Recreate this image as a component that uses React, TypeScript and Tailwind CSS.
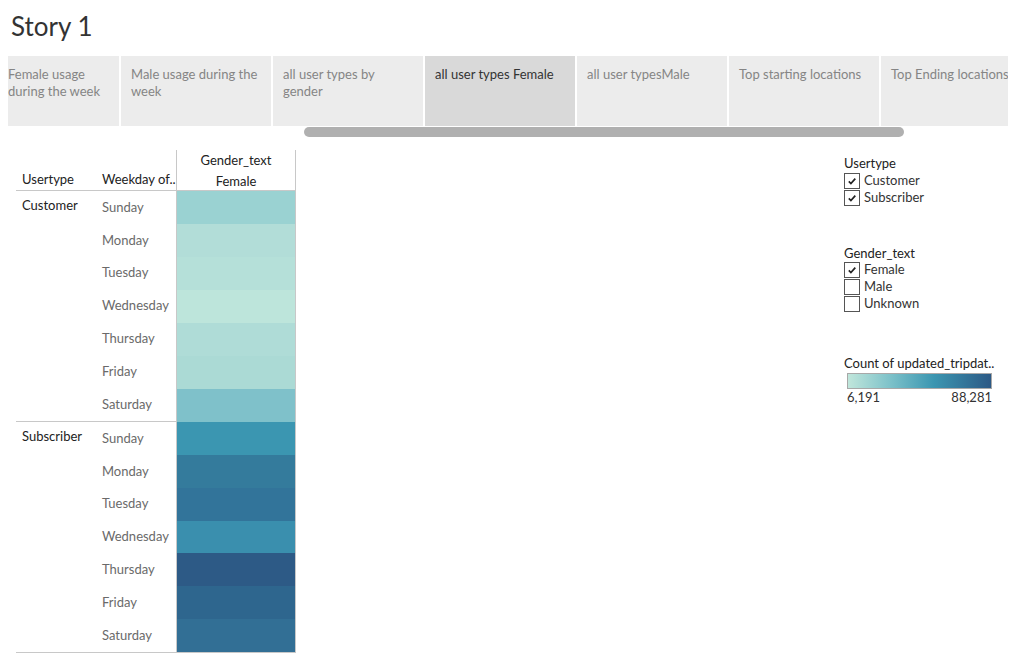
import React from 'react';

const tabs = [
  { label: 'Female usage during the week', w: 'w-[111px] pl-0 pr-[10px]' },
  { label: 'Male usage during the week', w: 'w-[150px] px-[10px]' },
  { label: 'all user types by gender', w: 'w-[150px] px-[10px]' },
  { label: 'all user types Female', w: 'w-[150px] px-[10px]', active: true },
  { label: 'all user typesMale', w: 'w-[150px] px-[10px]' },
  { label: 'Top starting locations', w: 'w-[150px] px-[10px]' },
  { label: 'Top Ending locations', w: 'w-[150px] px-[10px]' },
];

const days = ['Sunday', 'Monday', 'Tuesday', 'Wednesday', 'Thursday', 'Friday', 'Saturday'];

const groups = [
  {
    name: 'Customer',
    colors: ['bg-[#9ad2d2]', 'bg-[#b2ddd8]', 'bg-[#b5e0d9]', 'bg-[#bde5db]', 'bg-[#afdcd7]', 'bg-[#abdad5]', 'bg-[#7fc1ca]'],
  },
  {
    name: 'Subscriber',
    colors: ['bg-[#3b96b1]', 'bg-[#347b9c]', 'bg-[#32749a]', 'bg-[#3a8fae]', 'bg-[#2d5a86]', 'bg-[#2e668e]', 'bg-[#326f95]'],
  },
];

const Check = () => (
  <svg width="10" height="10" viewBox="0 0 10 10">
    <path d="M1.8 5.4 L3.9 7.5 L8.3 2.6" fill="none" stroke="#222" strokeWidth="1.7" />
  </svg>
);

const CheckRow = ({ label, checked }: { label: string; checked: boolean }) => (
  <div className="flex items-center h-[17px]">
    <div className="w-4 h-4 border border-[#555] bg-white flex items-center justify-center">
      {checked && <Check />}
    </div>
    <span className="ml-1 text-[13px] text-[#333]">{label}</span>
  </div>
);

export default function App() {
  return (
    <div className="w-[1016px] h-[660px] bg-white overflow-hidden font-['Lato','Liberation_Sans',sans-serif]">
      <div className="h-[56px] pl-[11px] flex items-center">
        <h1 className="text-[26px] text-[#333] leading-none pb-1">Story 1</h1>
      </div>

      <div className="ml-2 w-[1000px] h-[70px] overflow-hidden flex gap-[2px]">
        {tabs.map((t) => (
          <div
            key={t.label}
            className={`${t.w} shrink-0 h-full pt-[10px] text-[13px] leading-[17px] ${
              t.active ? 'bg-[#d9d9d9] text-[#333]' : 'bg-[#ececec] text-[#858585]'
            }`}
          >
            {t.label}
          </div>
        ))}
      </div>

      <div className="ml-[304px] mt-px w-[600px] h-[10px] rounded-full bg-[#b0b0b0]" />

      <div className="mt-[13px] flex">
        {/* crosstab */}
        <div className="ml-4 w-[280px] text-[13px]">
          <div className="flex h-[41px] border-b border-[#c8c8c8]">
            <div className="w-[80px] pl-1.5 flex items-end pb-[1px] text-[#222]">Usertype</div>
            <div className="w-[80px] pl-1.5 flex items-end pb-[1px] text-[#222] whitespace-nowrap">Weekday of..</div>
            <div className="w-[120px] border-x border-[#c8c8c8] flex flex-col items-center text-[#222]">
              <div className="h-5 leading-5">Gender_text</div>
              <div className="h-5 leading-5 pt-px">Female</div>
            </div>
          </div>
          {groups.map((g, gi) => (
            <div key={g.name} className={`flex ${gi === 1 ? 'border-b border-[#c8c8c8] h-[231px]' : 'h-[231px]'}`}>
              <div className={`w-[160px] flex ${gi === 0 ? 'border-b border-[#c8c8c8]' : ''}`}>
                <div className="w-[80px] pl-1.5">
                  <div className="h-[30px] flex items-center text-[#222]">{g.name}</div>
                </div>
                <div className="w-[80px] pl-1.5 flex flex-col">
                  {days.map((d) => (
                    <div key={d} className="flex-1 flex items-center text-[#6a6a6a]">{d}</div>
                  ))}
                </div>
              </div>
              <div className="w-[120px] border-x border-[#c8c8c8] flex flex-col">
                {g.colors.map((c, i) => (
                  <div key={i} className={`flex-1 ${c}`} />
                ))}
              </div>
            </div>
          ))}
        </div>

        {/* legends */}
        <div className="ml-[548px] w-[168px] text-[13px] text-[#222]">
          <div className="leading-[16px] mt-[5px]">Usertype</div>
          <div className="mt-[1px]">
            <CheckRow label="Customer" checked />
            <CheckRow label="Subscriber" checked />
          </div>

          <div className="leading-[16px] mt-[39px]">Gender_text</div>
          <div>
            <CheckRow label="Female" checked />
            <CheckRow label="Male" checked={false} />
            <CheckRow label="Unknown" checked={false} />
          </div>

          <div className="leading-[16px] mt-[43px] whitespace-nowrap">Count of updated_tripdat..</div>
          <div className="ml-[3px] mt-[2px] w-[145px] h-4 border border-[#a8a8a8] bg-[linear-gradient(to_right,#c0e6db,#7cc1c9_30%,#3b96b1_60%,#2c5985)]" />
          <div className="ml-[3px] w-[145px] flex justify-between leading-[16px] text-[#333]">
            <span>6,191</span>
            <span>88,281</span>
          </div>
        </div>
      </div>
    </div>
  );
}
